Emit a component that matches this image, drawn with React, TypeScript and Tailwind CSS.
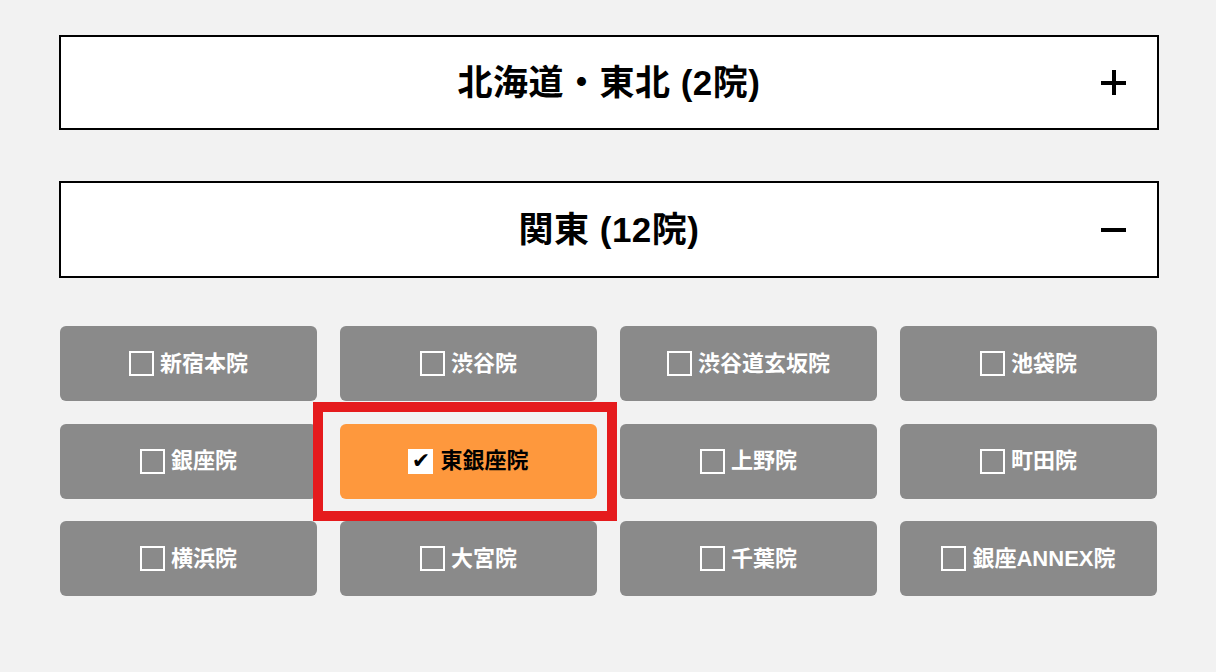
import React from 'react';

const clinics = [
  '新宿本院',
  '渋谷院',
  '渋谷道玄坂院',
  '池袋院',
  '銀座院',
  '東銀座院',
  '上野院',
  '町田院',
  '横浜院',
  '大宮院',
  '千葉院',
  '銀座ANNEX院',
];

const font = { fontFamily: '"Liberation Sans", "Noto Sans CJK JP", sans-serif' };

const Section = ({ title, open, height }: { title: string; open: boolean; height: string }) => {
  return (
    <div className={`relative flex items-center justify-center border-2 border-black bg-white ${height}`}>
      <h2 className="text-[35px] font-bold leading-none tracking-[0.5px] text-black">{title}</h2>
      {/* plus / minus toggle */}
      <div className="absolute inset-y-0 right-[31px] flex items-center">
        <span className="relative flex h-[25px] w-[25px] items-center justify-center">
          <span className="h-[4px] w-[25px] bg-black" />
          {!open && <span className="absolute left-[10.5px] top-0 h-[25px] w-[4px] bg-black" />}
        </span>
      </div>
    </div>
  );
};

const ClinicButton = ({ name, checked }: { name: string; checked: boolean }) => {
  return (
    <div className="relative">
      <button
        className={
          checked
            ? 'flex h-[75px] w-full items-center justify-center gap-[7px] rounded-[6px] bg-[#fe983d] text-black'
            : 'flex h-[75px] w-full items-center justify-center gap-[6px] rounded-[6px] bg-[#8a8a8a] text-white'
        }
      >
        {checked ? (
          <span
            className="flex h-[25px] w-[25px] items-center justify-center bg-white text-[22px] leading-none text-black"
            style={{ fontFamily: '"DejaVu Sans", sans-serif' }}
          >
            ✔
          </span>
        ) : (
          <span className="h-[25px] w-[25px] border-2 border-white" />
        )}
        <span className="text-[22px] font-bold leading-none">{name}</span>
      </button>
      {checked && (
        <span className="pointer-events-none absolute -bottom-[22px] -left-[27px] -right-[20px] -top-[22px] z-10 border-[10px] border-[#e51b1d]" />
      )}
    </div>
  );
};

export default function App() {
  return (
    <div className="min-h-screen bg-[#f2f2f2] px-[59px] pt-[35px]" style={font}>
      <div className="w-[1100px]">
        <Section title="北海道・東北 (2院)" open={false} height="h-[95px]" />
        <div className="mt-[51px]">
          <Section title="関東 (12院)" open={true} height="h-[97px]" />
        </div>
        <div className="ml-[1px] mt-[48px] grid w-[1097px] grid-cols-4 gap-x-[23px] gap-y-[22.5px]">
          {clinics.map((c) => (
            <ClinicButton key={c} name={c} checked={c === '東銀座院'} />
          ))}
        </div>
      </div>
    </div>
  );
}
